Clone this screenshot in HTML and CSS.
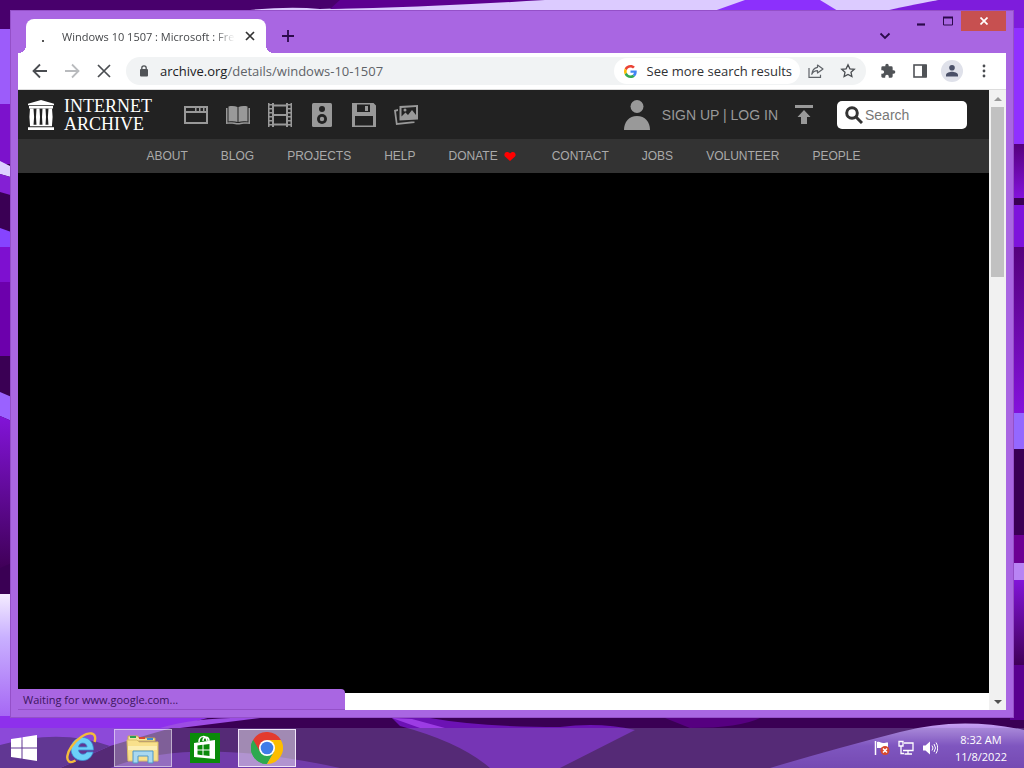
FILE: index.html
```html
<!DOCTYPE html>
<html lang="en">
<head>
    <meta charset="UTF-8">
    <meta name="viewport" content="width=device-width, initial-scale=1.0">
    <title>Windows 10 1507 : Microsoft : Free Download</title>
    <link rel="stylesheet" href="styles.css">
</head>
<body>

    <!-- Wallpaper -->
    <svg class="wallpaper" viewBox="0 0 1024 768" preserveAspectRatio="none" aria-hidden="true">
        <defs>
            <linearGradient id="pale" x1="0" y1="0" x2="0" y2="1">
                <stop offset="0" stop-color="#f4ecff"/><stop offset="0.35" stop-color="#c9b0ff"/><stop offset="1" stop-color="#a566f4"/>
            </linearGradient>
            <linearGradient id="violet" x1="0" y1="0" x2="0" y2="1">
                <stop offset="0" stop-color="#55007c"/><stop offset="1" stop-color="#8412dc"/>
            </linearGradient>
            <linearGradient id="plum" x1="0" y1="0" x2="0" y2="1">
                <stop offset="0" stop-color="#8214d8"/><stop offset="1" stop-color="#400058"/>
            </linearGradient>
            <linearGradient id="hill" x1="0" y1="0" x2="0" y2="1">
                <stop offset="0" stop-color="#c8a4f4"/><stop offset="0.5" stop-color="#7a44c4"/><stop offset="1" stop-color="#6a32b0"/>
            </linearGradient>
        </defs>
        <rect width="1024" height="768" fill="#3a0054"/>
        <!-- top edge -->
        <rect width="512" height="30" fill="#48006c"/>
        <path d="M250 10 Q290 6 320 9 Q430 5 520 0 H940 L889 12 H250Z" fill="#dccbff"/>
        <path d="M340 0 H545 Q430 7 330 9Z" fill="#5c0090"/>
        <path d="M714 11 L745 0 H820 L838 11Z" fill="#8c30fc"/>
        <path d="M885 11 Q920 3 940 0 H1024 V30 H885Z" fill="#7e1cdc"/>
        <!-- left edge -->
        <rect y="29" width="14" height="75" fill="#9c5cfa"/>
        <rect y="104" width="14" height="60" fill="#7c12cc"/>
        <path d="M0 161 L14 168 V178 L0 174Z" fill="#ddd0ff"/>
        <path d="M0 174 L14 178 V196 L0 192Z" fill="#8420d4"/>
        <path d="M0 228 L14 233 V247 H0Z" fill="#8644ff"/>
        <rect y="247" width="14" height="36" fill="#7e10d0"/>
        <rect y="282" width="14" height="74" fill="#6c00ac"/>
        <path d="M0 392 L14 398 V422 L0 416Z" fill="#9a62ff"/>
        <path d="M0 416 L14 422 V562 L0 568Z" fill="url(#plum)"/>
        <rect y="594" width="14" height="124" fill="url(#pale)"/>
        <!-- right edge -->
        <rect x="1010" y="28" width="14" height="116" fill="#9030ff"/>
        <rect x="1010" y="144" width="14" height="54" fill="url(#violet)"/>
        <rect x="1010" y="205" width="14" height="42" fill="#7e12dc"/>
        <rect x="1010" y="247" width="14" height="166" fill="url(#violet)"/>
        <rect x="1010" y="413" width="14" height="36" fill="#9468ff"/>
        <rect x="1010" y="535" width="14" height="28" fill="#6c0094"/>
        <rect x="1010" y="563" width="14" height="17" fill="#b884f4"/>
        <rect x="1010" y="580" width="14" height="85" fill="url(#plum)"/>
        <rect x="1010" y="665" width="14" height="55" fill="#5a0090"/>
        <!-- bottom edge -->
        <path d="M0 716 H215 Q170 728 110 746 L60 768 H0Z" fill="#8e30ec"/>
        <path d="M0 745 Q60 728 110 746 L60 768 H0Z" fill="#4c1480"/>
        <path d="M160 728 Q200 716 260 718 L180 728Z" fill="#9c4ce4"/>
        <path d="M110 768 Q190 735 340 768Z" fill="#651ca4"/>
        <path d="M392 718 H430 Q480 727 560 727 Q600 722 635 730 L560 768 H490 Q460 742 400 726Z" fill="#6c12b4"/>
        <path d="M392 718 L412 719 L445 728 H420Z" fill="#9c3ce4"/>
        <path d="M665 718 H760 Q740 728 690 728Z" fill="#560080"/>
        <path d="M770 768 Q830 750 900 732 Q960 716 1024 730 V768Z" fill="url(#hill)"/>
    </svg>

    <div class="desktop">
        <!-- Browser window -->
        <div class="window">
            <div class="titlebar">
                <div class="tab">
                    <span class="tab-spinner"></span>
                    <span class="tab-title">Windows 10 1507 : Microsoft : Free Download</span>
                    <button class="tab-close" aria-label="Close tab">
                        <svg width="10" height="10" viewBox="0 0 10 10"><path d="M1 1l8 8M9 1l-8 8" stroke="#333" stroke-width="1.7"/></svg>
                    </button>
                </div>
                <button class="new-tab" aria-label="New tab">
                    <svg width="12" height="12" viewBox="0 0 12 12"><path d="M6 0v12M0 6h12" stroke="#2c0a4c" stroke-width="1.8"/></svg>
                </button>
                <button class="tab-search" aria-label="Search tabs">
                    <svg width="12" height="8" viewBox="0 0 12 8"><path d="M1.500 1.500l4.500 4.500 4.500-4.500" fill="none" stroke="#2c0a4c" stroke-width="1.8"/></svg>
                </button>
                <div class="window-buttons">
                    <button aria-label="Minimize">
                        <svg width="10" height="10" viewBox="0 0 10 10"><path d="M1 8.500h8" stroke="#2c0a4c" stroke-width="2.200"/></svg>
                    </button>
                    <button aria-label="Maximize">
                        <svg width="10" height="10" viewBox="0 0 10 10"><path d="M.5 1v8h9V1M0 1.500h10" fill="none" stroke="#2c0a4c"/><path d="M0 1.500h10" stroke="#2c0a4c" stroke-width="2"/></svg>
                    </button>
                    <button class="close" aria-label="Close">
                        <svg width="8" height="8" viewBox="0 0 8 8"><path d="M.5.5l7 7M7.500.5l-7 7" stroke="#fff" stroke-width="1.700"/></svg>
                    </button>
                </div>
            </div>

            <div class="toolbar">
                <button aria-label="Back">
                    <svg width="16" height="16" viewBox="0 0 16 16"><path d="M15 8H2M8 1.500L1.500 8 8 14.500" fill="none" stroke="#4a4d51" stroke-width="1.800"/></svg>
                </button>
                <button aria-label="Forward">
                    <svg width="16" height="16" viewBox="0 0 16 16"><path d="M1 8h13M8 1.500L14.500 8 8 14.500" fill="none" stroke="#b9bbbe" stroke-width="1.800"/></svg>
                </button>
                <button aria-label="Stop">
                    <svg width="16" height="16" viewBox="0 0 16 16"><path d="M2 2l12 12M14 2L2 14" stroke="#4a4d51" stroke-width="1.700"/></svg>
                </button>
                <div class="omnibox">
                    <svg class="lock" width="10" height="12" viewBox="0 0 10 12"><rect x="1" y="4" width="8" height="7.500" rx="1" fill="#505357"/><path d="M2.800 5V3a2.200 2.200 0 0 1 4.400 0v2" fill="none" stroke="#505357" stroke-width="1.300"/></svg>
                    <span class="url"><b>archive.org</b>/details/windows-10-1507</span>
                    <button class="more-results">
                        <svg width="13" height="13" viewBox="0 0 48 48">
                            <path fill="#EA4335" d="M24 9.500c3.500 0 6.700 1.200 9.200 3.600l6.900-6.900C35.900 2.400 30.500 0 24 0 14.600 0 6.500 5.400 2.600 13.200l8 6.200C12.400 13.700 17.700 9.500 24 9.500z"/>
                            <path fill="#4285F4" d="M47 24.500c0-1.600-.2-3.100-.4-4.500H24v9h12.900c-.6 3-2.200 5.500-4.700 7.200l7.700 6C44.400 38 47 31.800 47 24.500z"/>
                            <path fill="#FBBC05" d="M10.500 28.600c-.5-1.500-.8-3-.8-4.600s.3-3.100.8-4.600l-8-6.200C.9 16.500 0 20.100 0 24s.9 7.500 2.600 10.800z"/>
                            <path fill="#34A853" d="M24 48c6.500 0 11.900-2.100 15.900-5.800l-7.700-6c-2.200 1.500-4.900 2.300-8.200 2.300-6.300 0-11.600-4.200-13.500-9.900l-8 6.200C6.500 42.600 14.600 48 24 48z"/>
                        </svg>
                        See more search results
                    </button>
                    <button aria-label="Share">
                        <svg width="16" height="14" viewBox="0 0 16 14"><path d="M1 4v9.300h11.500v-2.500" fill="none" stroke="#5f6368" stroke-width="1.200"/><path d="M9.500 1L15 5 9.500 9V6.700C6.500 6.700 5 8 3.800 10.300 4.200 6.500 6 3.800 9.500 3.300z" fill="none" stroke="#5f6368" stroke-width="1.200" stroke-linejoin="round"/></svg>
                    </button>
                    <button aria-label="Bookmark">
                        <svg width="16" height="16" viewBox="0 0 16 16"><path d="M8 1.800l1.900 4 4.400.5-3.300 3 .9 4.300L8 11.400l-3.900 2.200.9-4.300-3.300-3 4.400-.5z" fill="none" stroke="#4a4d51" stroke-width="1.300"/></svg>
                    </button>
                </div>
                <div class="actions">
                    <button aria-label="Extensions">
                        <svg width="16" height="16" viewBox="0 0 24 24"><path fill="#505357" d="M20.500 11H19V7a2 2 0 0 0-2-2h-4V3.500a2.500 2.500 0 0 0-5 0V5H4a2 2 0 0 0-2 2v3.800h1.500a2.700 2.700 0 0 1 0 5.400H2V20c0 1.100.9 2 2 2h3.800v-1.500a2.700 2.700 0 0 1 5.400 0V22H17a2 2 0 0 0 2-2v-4h1.500a2.500 2.500 0 0 0 0-5z"/></svg>
                    </button>
                    <button aria-label="Side panel">
                        <svg width="14" height="14" viewBox="0 0 14 14"><rect x="1" y="1" width="12" height="12" fill="none" stroke="#505357" stroke-width="1.600"/><path d="M9 1h5v12H9z" fill="#505357"/></svg>
                    </button>
                    <button class="profile" aria-label="Profile">
                        <svg width="14" height="14" viewBox="0 0 14 14"><circle cx="7" cy="3.800" r="2.800" fill="#4a5068"/><path d="M1 12.500V11c0-2.200 4-3.200 6-3.200s6 1 6 3.200v1.500z" fill="#4a5068"/></svg>
                    </button>
                    <button aria-label="Menu">
                        <svg width="4" height="14" viewBox="0 0 4 14"><g fill="#4a4d51"><circle cx="2" cy="2" r="1.400"/><circle cx="2" cy="7" r="1.400"/><circle cx="2" cy="12" r="1.400"/></g></svg>
                    </button>
                </div>
            </div>

            <!-- Web page -->
            <div class="viewport">
                <div class="site">
                    <header class="topbar">
                        <a class="logo" href="#">
                            <svg width="28" height="30" viewBox="0 0 28 32" preserveAspectRatio="none" fill="#fff">
                                <path d="M14 0l13 4v1.500H1V4zM2 6.500h24V9H2zM1 29h26v3H1zM3 26.500h22V28H3z"/>
                                <path d="M3 9h3.500l.6 9-.6 9H3l-.6-9zM9.500 9h3l.5 9-.5 9h-3L9 18zM15.500 9h3l.5 9-.5 9h-3l-.5-9zM21.500 9H25l.6 9-.6 9h-3.500l-.6-9z"/>
                            </svg>
                            <span class="logo-text">INTERNET<br>ARCHIVE</span>
                        </a>
                        <nav class="media">
                            <a href="#" aria-label="Web"><svg viewBox="0 0 24 24"><path d="M0 3h24v18H0zM2 10v9h20v-9zM2 5v3h9V5zM12.500 5v3H15V5zM16.500 5v3H19V5zM20.500 5v3H22V5z" fill-rule="evenodd"/></svg></a>
                            <a href="#" aria-label="Books"><svg viewBox="0 0 24 24"><path d="M2.500 3.500c3-.8 6.500-.6 9 .5v15c-2.500-1-6-1.100-9-.5zM21.500 3.500c-3-.8-6.500-.6-9 .5v15c2.500-1 6-1.100 9-.5z"/><path d="M0 5h1.500v14.500c3.500-.6 7-.5 9.500.5h2c2.500-1 6-1.100 9.500-.5V5H24v16c-3.500-.5-8-.5-10.500.5h-3C8 20.500 3.500 20.500 0 21z"/></svg></a>
                            <a href="#" aria-label="Video"><svg viewBox="0 0 24 24"><path d="M4 0h2v1.500h12V0h2v24h-2v-1.500H6V24H4zM6 3.500v7.500h12V3.500zM6 13v7.500h12V13z" fill-rule="evenodd"/><path d="M0 0h1.500v24H0zM22.500 0H24v24h-1.500z"/><path d="M0 1h5v1.500H0zM0 5h5v1.500H0zM0 9h5v1.500H0zM0 13h5v1.500H0zM0 17h5v1.500H0zM0 21h5v1.500H0zM19 1h5v1.500h-5zM19 5h5v1.500h-5zM19 9h5v1.500h-5zM19 13h5v1.500h-5zM19 17h5v1.500h-5zM19 21h5v1.500h-5z"/></svg></a>
                            <a href="#" aria-label="Audio"><svg viewBox="0 0 24 24"><rect x="2" width="20" height="24" rx="1.500"/><circle cx="12" cy="6" r="3" fill="#222"/><circle cx="12" cy="16" r="5" fill="#222"/><circle cx="12" cy="16" r="2.200"/></svg></a>
                            <a href="#" aria-label="Software"><svg viewBox="0 0 24 24"><path d="M0 0h21.500L24 2.500V24H0zM5 1.500V9h13V1.500zM3 13v9.500h18V13z" fill-rule="evenodd"/><path d="M13 3h3v5h-3z"/></svg></a>
                            <a href="#" aria-label="Images"><svg viewBox="0 0 24 24"><path d="M5.500 3l18.500-1v14.500L5.500 17.500zM7.500 5v8.500l4-4 2.500 2.500 4-5 4 5V4z" fill-rule="evenodd"/><circle cx="11" cy="7" r="1.500"/><path d="M0 7l4-1v2l-2 .5L3.500 20l14-1.500h3V20L2 22z"/></svg></a>
                        </nav>
                        <div class="account">
                            <svg class="person" width="26" height="30" viewBox="0 0 26 30"><circle cx="13" cy="6.500" r="6.500"/><path d="M0 30c0-8 5-14 13-14s13 6 13 14z"/></svg>
                            <span><a href="#">SIGN UP</a> | <a href="#">LOG IN</a></span>
                        </div>
                        <a class="upload" href="#" aria-label="Upload"><svg width="18" height="20" viewBox="0 0 18 20"><path d="M0 0h18v3H0zM9 5l6.500 7H12v7H6v-7H2.500z"/></svg></a>
                        <label class="search">
                            <svg width="18" height="18" viewBox="0 0 18 18"><circle cx="7" cy="7" r="5.300" fill="none" stroke="#333" stroke-width="3"/><path d="M11 11l6 6" stroke="#333" stroke-width="3"/></svg>
                            <input type="text" placeholder="Search" aria-label="Search">
                        </label>
                    </header>
                    <nav class="menu">
                        <a href="#">ABOUT</a>
                        <a href="#">BLOG</a>
                        <a href="#">PROJECTS</a>
                        <a href="#">HELP</a>
                        <a class="donate" href="#">DONATE
                            <svg width="12" height="9" viewBox="0 0 12 9"><path d="M6 9L1 4.500C-.5 2.500 1 0 3 0c1.400 0 2.400.6 3 1.600C6.600.6 7.600 0 9 0c2 0 3.500 2.500 2 4.500z" fill="#f00"/></svg>
                        </a>
                        <a href="#">CONTACT</a>
                        <a href="#">JOBS</a>
                        <a href="#">VOLUNTEER</a>
                        <a href="#">PEOPLE</a>
                    </nav>
                    <main class="theatre"></main>
                </div>
                <div class="scrollbar">
                    <span class="arrow arrow-up"></span>
                    <div class="track"><div class="thumb"></div></div>
                    <span class="arrow arrow-down"></span>
                </div>
                <div class="status">Waiting for www.google.com...</div>
            </div>
        </div>
    </div>

    <!-- Taskbar -->
    <footer class="taskbar">
        <button class="start" aria-label="Start">
            <svg width="26" height="26" viewBox="0 0 26 26" fill="#fff"><path d="M0 4l10.500-1.600V12.500H0zM11.500 2.200L26 0v12.500H11.500zM0 13.500h10.500v10L0 22zM11.500 13.500H26V26l-14.500-2.300z"/></svg>
        </button>
        <button class="app" aria-label="Internet Explorer">
            <svg width="32" height="32" viewBox="0 0 32 32">
                <path d="M17.500 5.500c6.500 0 11 4.900 11 12.500H13.500c.2 2.500 2 4.200 4.500 4.200 1.800 0 3.200-.8 3.900-2.200h6.200c-1.300 5-5.200 8.500-10.500 8.500-6.800 0-11.600-4.900-11.600-11.500S10.800 5.500 17.500 5.500zm-4 9.500h8.600c-.3-2.400-2-3.900-4.300-3.900S13.900 12.600 13.500 15z" fill="#6cd0f8" stroke="#3a90d4" stroke-width=".8"/>
                <path d="M29.500 10c1.500-4.500.5-8-3-8.500-5.500-.8-14.500 5-20 13C2 21 1 27.500 4 29.500c1.500 1 4 .5 6.500-1" fill="none" stroke="#f4bc3c" stroke-width="2.400"/>
            </svg>
        </button>
        <button class="app open" aria-label="File Explorer">
            <svg width="34" height="32" viewBox="0 0 34 32">
                <path d="M2 4h10l1 2h16v3H2z" fill="#f2e4a0" stroke="#c8a850"/>
                <path d="M4 5h6" stroke="#28a050" stroke-width="2"/><path d="M13 6h6" stroke="#d84830" stroke-width="2"/><path d="M21 7h6" stroke="#3c8cd0" stroke-width="2"/>
                <path d="M1 8h10l2 2h19v19H2z" fill="#f8e08c" stroke="#d8bc68"/>
                <path d="M2 14h29v4H2z" fill="#fceeb4"/>
                <path d="M7 31V19h20v12h-5v-7H12v7z" fill="#a8d8f0" stroke="#5098c8"/>
            </svg>
        </button>
        <button class="app" aria-label="Store">
            <svg width="30" height="30" viewBox="0 0 30 30">
                <rect width="30" height="30" fill="#0a8a0a"/>
                <path d="M4 10l21-3v19L4 24z" fill="#fff"/>
                <path d="M9 9c0-7 8-7 8-1M13 8c0-5 6-5 6 0" fill="none" stroke="#fff" stroke-width="1.500"/>
                <path d="M7.500 12.500l5-.7v4.700h-5zM13.500 11.700l6-.8v5.600h-6zM7.500 17.500h5v4.700l-5-.6zM13.500 17.500h6V23l-6-.7z" fill="#0a8a0a"/>
            </svg>
        </button>
        <button class="app active" aria-label="Google Chrome">
            <svg width="32" height="32" viewBox="0 0 48 48">
                <path d="M24 24L3.200 12A24 24 0 0 1 44.800 12z" fill="#e33b2e"/>
                <path d="M24 24L3.200 12A24 24 0 0 0 24 48L34.400 30z" fill="#2da94f"/>
                <path d="M24 12h20.800A24 24 0 0 1 24 48l10.400-18z" fill="#fdbd00"/>
                <path d="M24 12H3.200l10.400 18L24 24z" fill="#e33b2e"/>
                <path d="M3.200 12l10.400 18L24 48A24 24 0 0 1 3.200 12z" fill="#2da94f"/>
                <circle cx="24" cy="24" r="12" fill="#fff"/><circle cx="24" cy="24" r="9.500" fill="#3f7ce8"/>
            </svg>
        </button>
        <div class="tray">
            <svg width="16" height="16" viewBox="0 0 16 16"><path d="M1.500 1v14" stroke="#fff" stroke-width="1.500"/><path d="M3 2c3-1 4 1 6 1s3-.5 5-.5V8H3z" fill="#fff"/><circle cx="11" cy="10.500" r="4.500" fill="#d8482c"/><path d="M9 8.500l4 4M13 8.500l-4 4" stroke="#fff" stroke-width="1.500"/></svg>
            <svg width="16" height="16" viewBox="0 0 16 16" fill="none" stroke="#fff" stroke-width="1.300"><path d="M6 3h9v7.500H5M10 10.500V14M6.500 14H14M1 1.500h4V6H1zM3 6v7.500h3"/></svg>
            <svg width="16" height="16" viewBox="0 0 16 16"><path d="M1 5.500h2.500L8 1.500v13L3.500 10.500H1z" fill="#fff"/><path d="M10 5.500q2 2.500 0 5M12 4q3 4 0 8M14 2.500q3.500 5.500 0 11" fill="none" stroke="#fff"/></svg>
        </div>
        <div class="clock">8:32 AM<br>11/8/2022</div>
    </footer>

</body>
</html>
```
FILE: styles.css
```css
* {
    box-sizing: border-box;
}

body {
    margin: 0;
    height: 100vh;
    display: flex;
    flex-direction: column;
    overflow: hidden;
    font-family: "Open Sans", "Noto Sans", sans-serif;
    font-size: 12px;
}

button {
    display: flex;
    align-items: center;
    justify-content: center;
    padding: 0;
    border: none;
    background: none;
    font: inherit;
    color: inherit;
}

a {
    color: inherit;
    text-decoration: none;
}

svg {
    display: block;
    flex: none;
}

.wallpaper {
    position: absolute;
    inset: 0;
    width: 100%;
    height: 100%;
    z-index: -1;
}

.desktop {
    flex: 1;
    min-height: 0;
    display: flex;
    padding: 10px;
}

/* Window frame */
.window {
    flex: 1;
    min-width: 0;
    display: flex;
    flex-direction: column;
    padding: 0 7px 7px;
    border: 1px solid #9450c8;
    background: #a966e2;
}

.titlebar {
    height: 42px;
    display: flex;
    align-items: flex-end;
}

.tab {
    position: relative;
    width: 240px;
    height: 34px;
    margin-left: 8px;
    display: flex;
    align-items: center;
    padding: 0 11px 0 16px;
    border-radius: 8px 8px 0 0;
    background: #fff;
}

.tab::before,
.tab::after {
    content: "";
    position: absolute;
    bottom: 0;
    width: 8px;
    height: 8px;
}

.tab::before {
    left: -8px;
    background: radial-gradient(circle at 0 0, transparent 8px, #fff 8px);
}

.tab::after {
    right: -8px;
    background: radial-gradient(circle at 100% 0, transparent 8px, #fff 8px);
}

.tab-spinner {
    width: 2px;
    height: 2px;
    margin: 10px 18px 0 0;
    background: #555;
}

.tab-title {
    flex: 1;
    overflow: hidden;
    white-space: nowrap;
    font-size: 11px;
    color: #45474a;
    -webkit-mask-image: linear-gradient(to right, #000 88%, transparent);
    mask-image: linear-gradient(to right, #000 88%, transparent);
}

.tab-close {
    margin-left: 10px;
}

.new-tab {
    width: 28px;
    height: 34px;
    margin-left: 8px;
}

.tab-search {
    width: 28px;
    height: 34px;
    margin-left: auto;
}

.window-buttons {
    display: flex;
    align-self: flex-start;
    margin-left: 8px;
}

.window-buttons button {
    width: 27px;
    height: 20px;
}

.window-buttons .close {
    width: 45px;
    background: #c75050;
}

/* Toolbar */
.toolbar {
    height: 37px;
    display: flex;
    align-items: center;
    padding: 0 6px;
    border-bottom: 1px solid #ddd;
    background: #fff;
}

.toolbar > button {
    width: 32px;
    height: 28px;
}

.omnibox {
    flex: 1;
    height: 28px;
    display: flex;
    align-items: center;
    margin-left: 6px;
    padding: 0 2px 0 13px;
    border-radius: 14px;
    background: #f1f3f4;
    font-size: 13px;
}

.omnibox button {
    width: 32px;
    height: 28px;
}

.lock {
    margin-right: 11px;
}

.url {
    color: #5f6368;
}

.url b {
    font-weight: normal;
    color: #202124;
}

.omnibox .more-results {
    width: auto;
    height: 26px;
    gap: 10px;
    margin-left: auto;
    padding: 0 8px 0 10px;
    border-radius: 13px;
    background: #fff;
    color: #303134;
}

.actions {
    display: flex;
    align-items: center;
    margin-left: 6px;
}

.actions button {
    width: 32px;
    height: 28px;
}

.actions .profile {
    width: 22px;
    height: 22px;
    margin: 0 5px;
    border-radius: 50%;
    background: #dfe1ea;
}

/* Archive page */
.viewport {
    position: relative;
    flex: 1;
    min-height: 0;
    display: flex;
    background: #fff;
}

.site {
    flex: 1;
    min-width: 0;
    display: flex;
    flex-direction: column;
    font-family: "Liberation Sans", Arial, sans-serif;
    color: #999;
    fill: #999;
}

.topbar {
    height: 49px;
    display: flex;
    align-items: center;
    padding: 0 22px 0 9px;
    background: #222;
}

.logo {
    display: flex;
    align-items: center;
    gap: 9px;
    width: 157px;
    color: #fff;
}

.logo-text {
    font-family: "Liberation Serif", "Times New Roman", serif;
    font-size: 18px;
    line-height: 18px;
}

.media {
    display: flex;
    gap: 18px;
}

.media svg {
    width: 24px;
    height: 24px;
}

.account {
    display: flex;
    align-items: center;
    gap: 12px;
    margin-left: auto;
    font-size: 14px;
}

.upload {
    margin-left: 17px;
}

.search {
    width: 130px;
    height: 28px;
    display: flex;
    align-items: center;
    gap: 2px;
    margin-left: 24px;
    padding: 0 8px;
    border-radius: 5px;
    background: #fff;
}

.search input {
    flex: 1;
    min-width: 0;
    padding: 0;
    border: none;
    outline: none;
    background: none;
    font-family: inherit;
    font-size: 14px;
}

.search input::placeholder {
    color: #777;
}

.menu {
    height: 34px;
    display: flex;
    align-items: center;
    justify-content: center;
    gap: 33px;
    background: #333;
    color: #aaa;
}

.donate {
    display: flex;
    align-items: center;
    gap: 6px;
    padding-right: 3px;
}

.theatre {
    flex: 1;
    margin-bottom: 17px;
    background: #000;
}

/* Scrollbar */
.scrollbar {
    width: 17px;
    display: flex;
    flex-direction: column;
    align-items: center;
    background: #f1f1f1;
}

.arrow {
    height: 17px;
    display: flex;
    align-items: center;
}

.arrow::before {
    content: "";
    border: 4px solid transparent;
}

.arrow-up::before {
    border-top: none;
    border-bottom-color: #999;
}

.arrow-down::before {
    border-bottom: none;
    border-top-color: #505050;
}

.track {
    flex: 1;
    width: 13px;
}

.thumb {
    height: 29%;
    background: #c1c1c1;
}

/* Loading status over the page */
.status {
    position: absolute;
    left: 0;
    bottom: 0;
    width: 327px;
    height: 21px;
    padding-left: 5px;
    border-radius: 0 4px 0 0;
    background: #a966e2;
    border-bottom: 1px solid #9450c8;
    color: #3c1560;
    font-size: 11px;
    line-height: 21px;
}

/* Taskbar */
.taskbar {
    height: 40px;
    display: flex;
    align-items: center;
    padding: 0 17px 0 11px;
    background: rgba(138, 120, 183, 0.35);
    color: #fff;
}

.start {
    margin-right: 15px;
}

.app {
    width: 58px;
    height: 38px;
    margin-right: 4px;
    border: 1px solid transparent;
}

.app.open {
    border-color: rgba(255, 255, 255, 0.5);
    background: rgba(255, 255, 255, 0.25);
}

.app.active {
    border-color: #f0e4f8;
    background: rgba(255, 255, 255, 0.45);
}

.tray {
    display: flex;
    gap: 8px;
    margin-left: auto;
}

.clock {
    margin-left: 17px;
    font-size: 11px;
    line-height: 17px;
    text-align: center;
}
```
